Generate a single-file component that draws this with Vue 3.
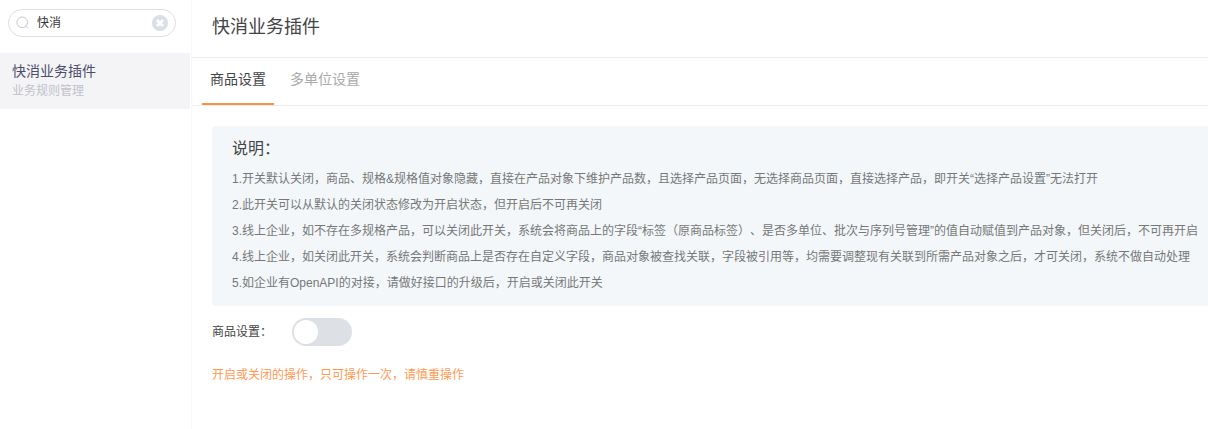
<template>
  <div class="page">
    <aside class="sidebar">
      <div class="search">
        <svg class="search-icon" viewBox="0 0 14 14">
          <circle cx="6.2" cy="6.3" r="5.3" />
          <path d="M10 10.2l2 2" />
        </svg>
        <input v-model="keyword" class="search-input" type="text" />
        <svg class="clear-icon" viewBox="0 0 16 16" @click="keyword = ''">
          <circle cx="8" cy="8" r="8" />
          <path d="M5 5l6 6M11 5l-6 6" />
        </svg>
      </div>
      <div class="menu-item">
        <div class="menu-name">快消业务插件</div>
        <div class="menu-group">业务规则管理</div>
      </div>
    </aside>

    <main class="main">
      <h2 class="title">快消业务插件</h2>
      <nav class="tabs">
        <div
          v-for="tab in tabs"
          :key="tab.id"
          class="tab"
          :class="{ active: tab.id === activeTab }"
          @click="activeTab = tab.id"
        >
          {{ tab.label }}
        </div>
      </nav>

      <section class="content">
        <div class="notice">
          <h3>说明：</h3>
          <p v-for="(line, index) in notes" :key="index">{{ index + 1 }}.{{ line }}</p>
        </div>
        <div class="setting">
          <span class="setting-label">商品设置：</span>
          <div class="switch" :class="{ on: enabled }" @click="enabled = !enabled">
            <span class="switch-dot"></span>
          </div>
        </div>
        <p class="warning">开启或关闭的操作，只可操作一次，请慎重操作</p>
      </section>
    </main>
  </div>
</template>

<script setup>
import { ref } from 'vue'

const keyword = ref('快消')
const activeTab = ref('product')
const enabled = ref(false)

const tabs = [
  { id: 'product', label: '商品设置' },
  { id: 'unit', label: '多单位设置' },
]

const notes = [
  '开关默认关闭，商品、规格&规格值对象隐藏，直接在产品对象下维护产品数，且选择产品页面，无选择商品页面，直接选择产品，即开关“选择产品设置”无法打开',
  '此开关可以从默认的关闭状态修改为开启状态，但开启后不可再关闭',
  '线上企业，如不存在多规格产品，可以关闭此开关，系统会将商品上的字段“标签（原商品标签）、是否多单位、批次与序列号管理”的值自动赋值到产品对象，但关闭后，不可再开启',
  '线上企业，如关闭此开关，系统会判断商品上是否存在自定义字段，商品对象被查找关联，字段被引用等，均需要调整现有关联到所需产品对象之后，才可关闭，系统不做自动处理',
  '如企业有OpenAPI的对接，请做好接口的升级后，开启或关闭此开关',
]
</script>

<style>
body {
  margin: 0;
  overflow: hidden;
}
</style>

<style scoped>
.page {
  display: flex;
  height: 429px;
  overflow: hidden;
  background: #fff;
  color: #444;
  font-family: "Liberation Sans", "Noto Sans CJK SC", sans-serif;
  font-size: 12px;
  text-spacing-trim: space-all;
}

.sidebar {
  flex: 0 0 190px;
}

.search {
  display: flex;
  align-items: center;
  box-sizing: border-box;
  width: 168px;
  height: 28px;
  margin: 9px 0 16px 8px;
  padding: 0 7px;
  border: 1px solid #dcdfe8;
  border-radius: 14px;
}

.search-icon {
  flex: none;
  width: 14px;
  height: 14px;
  fill: none;
  stroke: #c3c7d1;
}

.search-input {
  flex: 1;
  min-width: 0;
  padding: 0 0 3px 7px;
  border: 0;
  outline: 0;
  background: none;
  color: #333;
  font: inherit;
}

.clear-icon {
  flex: none;
  width: 16px;
  height: 16px;
  fill: #dadee6;
}

.clear-icon path {
  stroke: #fff;
  stroke-width: 2.8;
}

.menu-item {
  box-sizing: border-box;
  height: 56px;
  padding: 9px 12px;
  background: #f4f4f7;
}

.menu-name {
  color: #4b4e69;
  font-size: 14px;
  line-height: 19px;
}

.menu-group {
  color: #c0c2ca;
  line-height: 21px;
}

.main {
  flex: 1;
  min-width: 0;
  margin-left: 1px;
  border-left: 1px solid #f8f8f9;
}

.title {
  height: 57px;
  margin: 0;
  padding-left: 20px;
  border-bottom: 1px solid #ebecee;
  font-size: 18px;
  font-weight: 400;
  line-height: 54px;
}

.tabs {
  display: flex;
  gap: 8px;
  height: 47px;
  padding-left: 10px;
  border-bottom: 1px solid #ebecee;
}

.tab {
  box-sizing: border-box;
  height: 47px;
  padding: 0 8px;
  border-bottom: 2px solid transparent;
  color: #aaa;
  font-size: 14px;
  line-height: 43px;
  cursor: pointer;
}

.tab.active {
  border-color: #ff8f3e;
  color: #444;
}

.content {
  padding: 20px 0 0 20px;
}

.notice {
  box-sizing: border-box;
  height: 180px;
  padding: 11px 0 0 20px;
  border-radius: 4px 0 0 4px;
  background: #f3f7fa;
}

.notice h3 {
  margin: 0 0 5px;
  font-size: 16px;
  font-weight: 400;
  line-height: 24px;
}

.notice p {
  margin: 0;
  color: #777;
  line-height: 26px;
  white-space: nowrap;
}

.setting {
  display: flex;
  align-items: center;
  height: 28px;
  margin-top: 12px;
}

.setting-label {
  width: 80px;
  padding-bottom: 3px;
}

.switch {
  display: flex;
  align-items: center;
  box-sizing: border-box;
  width: 60px;
  height: 28px;
  padding: 0 2px;
  border-radius: 14px;
  background: #dde0e5;
  cursor: pointer;
}

.switch.on {
  justify-content: flex-end;
  background: #ff8f3e;
}

.switch-dot {
  width: 24px;
  height: 24px;
  border-radius: 50%;
  background: #fff;
}

.warning {
  margin: 20px 0 0;
  color: #ff9a55;
  line-height: 18px;
}
</style>
